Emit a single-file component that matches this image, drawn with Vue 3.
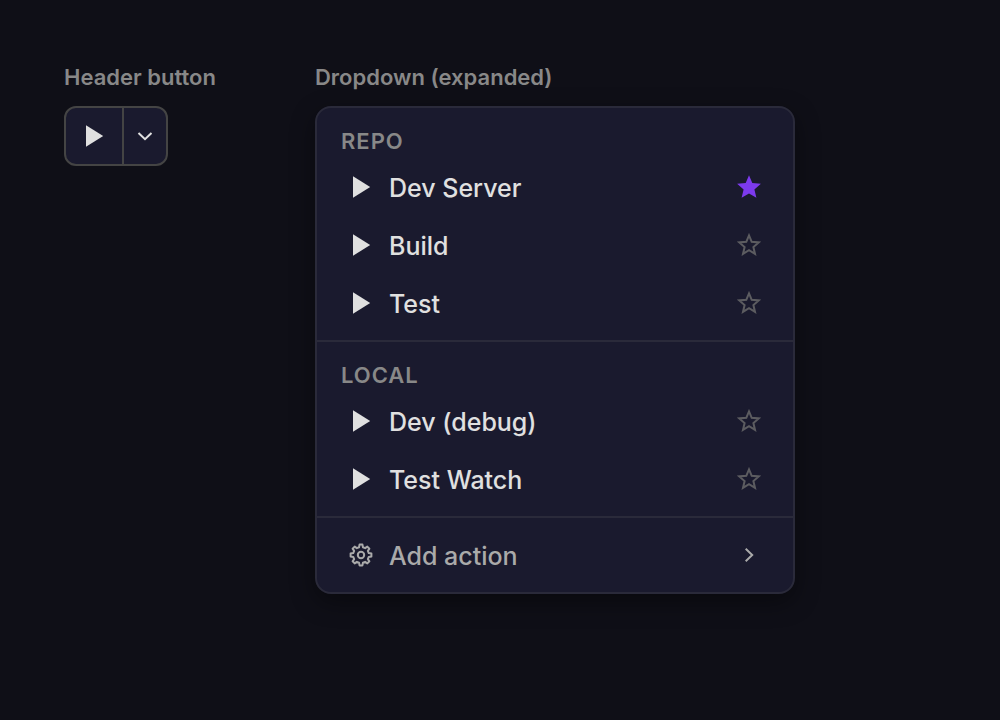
<script setup>
import { ref } from 'vue'

const groups = ref([
  {
    id: 'repo',
    title: 'REPO',
    actions: [
      { name: 'Dev Server', starred: true },
      { name: 'Build', starred: false },
      { name: 'Test', starred: false },
    ],
  },
  {
    id: 'local',
    title: 'LOCAL',
    actions: [
      { name: 'Dev (debug)', starred: false },
      { name: 'Test Watch', starred: false },
    ],
  },
])

// Eight-toothed gear outline centred in a 24-unit box.
function gearOutline() {
  const corners = [[-14, 8], [-8, 10.5], [8, 10.5], [14, 8]]
  const points = []
  for (let tooth = 0; tooth < 8; tooth++) {
    for (const [offset, radius] of corners) {
      const angle = ((tooth * 45 + offset - 90) * Math.PI) / 180
      points.push(`${(12 + radius * Math.cos(angle)).toFixed(2)} ${(12 + radius * Math.sin(angle)).toFixed(2)}`)
    }
  }
  return `M${points.join('L')}Z`
}

const gearPath = gearOutline()
const fullStar = 'M12 0.2 15.3 8.1 23.9 8.8 17.4 14.4 19.4 22.8 12 18.4 4.6 22.8 6.6 14.4 0.1 8.8 8.7 8.1Z'
const emptyStar = 'M12 2.4 14.7 8.8 21.8 9.4 16.4 14 18 20.9 12 17.2 6 20.9 7.6 14 2.2 9.4 9.3 8.8Z'
</script>

<template>
  <main class="page">
    <section class="column">
      <h2 class="caption">Header button</h2>
      <div class="split">
        <button class="run" type="button" aria-label="Run">
          <svg class="icon" viewBox="0 0 24 24"><path class="solid" d="M4 1.2 21.2 12 4 22.8Z" /></svg>
        </button>
        <button class="more" type="button" aria-label="Choose action">
          <svg class="icon" viewBox="0 0 24 24"><path class="line" d="M5.5 9 12 15.2 18.5 9" /></svg>
        </button>
      </div>
    </section>

    <section class="column menu-column">
      <h2 class="caption">Dropdown (expanded)</h2>
      <div class="menu">
        <div v-for="group in groups" :key="group.id" class="group">
          <h3 class="title">{{ group.title }}</h3>
          <div v-for="action in group.actions" :key="action.name" class="row">
            <button class="action" type="button">
              <svg class="icon" viewBox="0 0 24 24"><path class="solid" d="M4 1.2 21.2 12 4 22.8Z" /></svg>
              <span class="name">{{ action.name }}</span>
            </button>
            <button
              class="star"
              :class="{ starred: action.starred }"
              type="button"
              :aria-label="'Favourite ' + action.name"
              :aria-pressed="action.starred"
              @click="action.starred = !action.starred"
            >
              <svg class="icon" viewBox="0 0 24 24">
                <path :class="action.starred ? 'solid' : 'line'" :d="action.starred ? fullStar : emptyStar" />
              </svg>
            </button>
          </div>
        </div>
        <div class="group">
          <button class="row add" type="button">
            <svg class="icon" viewBox="0 0 24 24">
              <path class="line round" :d="gearPath" />
              <circle class="line" cx="12" cy="12" r="3.2" />
            </svg>
            <span class="name">Add action</span>
            <svg class="icon" viewBox="0 0 24 24"><path class="line" d="M8.7 5.7 15.2 12 8.7 18.3" /></svg>
          </button>
        </div>
      </div>
    </section>
  </main>
</template>

<style>
body {
  background: #0f0f17;
}
</style>

<style scoped>
.page {
  display: flex;
  align-items: flex-start;
  gap: 99px;
  padding: 64px;
  font-family: Inter, "Liberation Sans", sans-serif;
  color: #e0e0e0;
}

.menu-column {
  flex: 0 1 480px;
}

.caption,
.title {
  margin: 0;
  font-size: 22px;
  line-height: 26px;
  font-weight: 600;
  color: #888;
}

.caption {
  margin-bottom: 16px;
  white-space: nowrap;
}

button {
  margin: 0;
  padding: 0;
  border: 0;
  background: none;
  color: inherit;
  font: inherit;
  text-align: left;
  cursor: pointer;
}

.icon {
  display: block;
  flex: none;
  width: 24px;
  height: 24px;
}

.solid {
  fill: currentColor;
}

.line {
  fill: none;
  stroke: currentColor;
  stroke-width: 2;
}

.round {
  stroke-linejoin: round;
}

.split {
  display: inline-flex;
  border: 2px solid #444;
  border-radius: 12px;
  background: #1a1a2e;
  overflow: hidden;
}

.run {
  padding: 16px;
}

.more {
  padding: 16px 9px;
  border-left: 2px solid #444;
}

.menu {
  border: 2px solid #2a2a3a;
  border-radius: 16px;
  background: #1a1a2e;
  box-shadow: 0 8px 24px rgba(0, 0, 0, 0.4);
}

.group {
  padding: 8px 0;
}

.group + .group {
  border-top: 2px solid #2a2a3a;
}

.title {
  padding: 12px 24px 4px;
  letter-spacing: 1px;
}

.row {
  display: flex;
  align-items: center;
  padding: 0 32px;
  font-size: 25px;
  font-weight: 500;
  line-height: 56px;
}

.action {
  display: flex;
  flex: 1;
  align-items: center;
  gap: 16px;
}

.name {
  flex: 1;
  padding-top: 2px;
}

.star {
  color: #5c5c60;
}

.starred {
  color: #7c3aed;
}

.add {
  width: 100%;
  gap: 16px;
  color: #aaa;
}
</style>
